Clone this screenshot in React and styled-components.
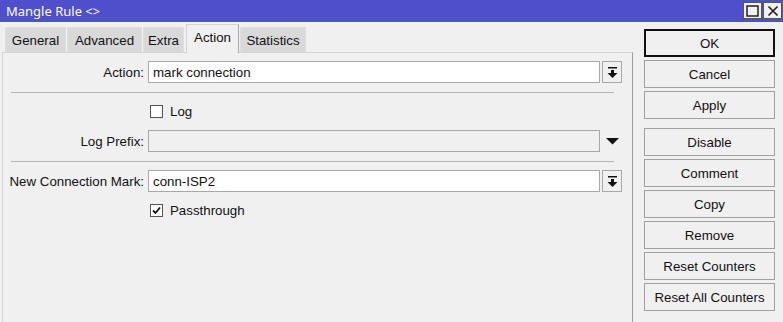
import React from 'react'
import styled, { createGlobalStyle } from 'styled-components';

const GlobalStyle = createGlobalStyle`
    html, body {
        margin: 0;
        padding: 0;
        background: #f0f0f0;
        overflow: hidden;
    }
    * {
        box-sizing: border-box;
    }
`;

function ComboIcon() {
    return (
        <svg width="11" height="11" viewBox="0 0 11 11">
            <rect x="1" y="0" width="9" height="1.5" fill="#111" />
            <rect x="4" y="3" width="3" height="3" fill="#111" />
            <polygon points="0.5,6 10.5,6 5.5,11" fill="#111" />
        </svg>
    )
}

function DownTriangle() {
    return (
        <svg width="13" height="7" viewBox="0 0 13 7">
            <polygon points="0,0 13,0 6.5,6.5" fill="#111" />
        </svg>
    )
}

function CheckMark() {
    return (
        <svg width="11" height="11" viewBox="0 0 11 11">
            <polyline points="2,5.5 4.5,8 9,2.5" fill="none" stroke="#111" strokeWidth="1.8" />
        </svg>
    )
}

const tabs = [
    { name: 'General', width: 61 },
    { name: 'Advanced', width: 75 },
    { name: 'Extra', width: 41 },
    { name: 'Action', width: 53, active: true },
    { name: 'Statistics', width: 66 },
];

const buttons = ['OK', 'Cancel', 'Apply', 'Disable', 'Comment', 'Copy', 'Remove', 'Reset Counters', 'Reset All Counters'];

function App() {
    return (
        <>
            <GlobalStyle />
            <WindowStyled>
                <TitleBar>
                    <span>Mangle Rule &lt;&gt;</span>
                    <TitleButtons>
                        <TitleButton>
                            <svg width="13" height="12" viewBox="0 0 13 12">
                                <rect x="1" y="1" width="11" height="10" fill="none" stroke="#222" strokeWidth="1.5" />
                            </svg>
                        </TitleButton>
                        <TitleButton>
                            <svg width="12" height="12" viewBox="0 0 12 12">
                                <path d="M1.5 1.5 L10.5 10.5 M10.5 1.5 L1.5 10.5" stroke="#222" strokeWidth="1.7" />
                            </svg>
                        </TitleButton>
                    </TitleButtons>
                </TitleBar>
                <Body>
                    <LeftPane>
                        <TabRow>
                            {tabs.map((t) => (
                                <Tab key={t.name} $active={t.active} $width={t.width}>{t.name}</Tab>
                            ))}
                        </TabRow>
                        <Panel>
                            <Row>
                                <Label>Action:</Label>
                                <Field>mark connection</Field>
                                <ComboButton><ComboIcon /></ComboButton>
                            </Row>
                            <Separator />
                            <Row $short>
                                <span />
                                <Check>
                                    <Box />
                                    Log
                                </Check>
                            </Row>
                            <Row>
                                <Label>Log Prefix:</Label>
                                <Field $disabled />
                                <Arrow><DownTriangle /></Arrow>
                            </Row>
                            <Separator />
                            <Row>
                                <Label>New Connection Mark:</Label>
                                <Field>conn-ISP2</Field>
                                <ComboButton><ComboIcon /></ComboButton>
                            </Row>
                            <Row $short>
                                <span />
                                <Check>
                                    <Box><CheckMark /></Box>
                                    Passthrough
                                </Check>
                            </Row>
                        </Panel>
                    </LeftPane>
                    <ButtonColumn>
                        {buttons.map((b, i) => (
                            <Button key={b} $default={i === 0} $spaced={b === 'Disable'}>{b}</Button>
                        ))}
                    </ButtonColumn>
                </Body>
            </WindowStyled>
        </>
    )
}

const WindowStyled = styled.div`
    width: 783px;
    height: 322px;
    background: #f0f0f0;
    font-family: 'Liberation Sans', Arial, sans-serif;
    font-size: 13.3px;
    color: #111;
    display: flex;
    flex-direction: column;
`;

const TitleBar = styled.div`
    height: 22px;
    flex-shrink: 0;
    background: #4f4fcb;
    color: #fff;
    display: flex;
    align-items: center;
    justify-content: space-between;
    padding-left: 6px;
    font-family: 'Noto Sans', 'Open Sans', sans-serif;
    font-size: 13px;
`;

const TitleButtons = styled.div`
    display: flex;
    gap: 1px;
    margin-right: 1px;
    align-self: flex-start;
    margin-top: 2px;
`;

const TitleButton = styled.div`
    width: 19px;
    height: 17px;
    background: #f0f0f0;
    border: 1px solid #555;
    display: flex;
    align-items: center;
    justify-content: center;
`;

const Body = styled.div`
    flex: 1;
    display: flex;
    min-height: 0;
`;

const LeftPane = styled.div`
    width: 633px;
    padding-left: 2px;
    display: flex;
    flex-direction: column;
`;

const TabRow = styled.div`
    height: 30px;
    display: flex;
    align-items: flex-end;
    padding-left: 3px;
    gap: 1px;
`;

const Tab = styled.div`
    width: ${(p) => p.$width}px;
    height: ${(p) => (p.$active ? 29 : 25)}px;
    margin-bottom: ${(p) => (p.$active ? -1 : 0)}px;
    margin-left: ${(p) => (p.$active ? 1 : 0)}px;
    display: flex;
    align-items: center;
    justify-content: center;
    background: ${(p) => (p.$active ? '#f0f0f0' : '#d9d9d9')};
    border: 1px solid ${(p) => (p.$active ? '#d4d4d4' : '#dedede')};
    border-right-color: ${(p) => (p.$active ? '#a8a8a8' : '#dedede')};
    border-bottom: none;
    padding-bottom: ${(p) => (p.$active ? 3 : 0)}px;
    position: relative;
    z-index: ${(p) => (p.$active ? 1 : 0)};
    color: #111;
`;

const Panel = styled.div`
    flex: 1;
    border: 1px solid #d4d4d4;
    border-right-color: #a0a0a0;
    border-bottom: none;
    padding: 8px 10px 0 0;
    display: flex;
    flex-direction: column;
`;

const Row = styled.div`
    display: grid;
    grid-template-columns: 145px 452px 22px;
    height: ${(p) => (p.$short ? 21 : 22)}px;
    margin-bottom: 8px;
    align-items: center;
`;

const Label = styled.div`
    text-align: right;
    padding-right: 4px;
    white-space: nowrap;
`;

const Field = styled.div`
    height: 22px;
    border: 1px solid #a8a8a8;
    background: ${(p) => (p.$disabled ? '#f0f0f0' : '#fff')};
    padding: 0 4px;
    display: flex;
    align-items: center;
`;

const ComboButton = styled.div`
    height: 22px;
    margin-left: 2px;
    border: 1px solid #a8a8a8;
    background: #f0f0f0;
    display: flex;
    align-items: center;
    justify-content: center;
`;

const Arrow = styled.div`
    display: flex;
    align-items: center;
    justify-content: center;
    padding-left: 3px;
`;

const Separator = styled.div`
    height: 1px;
    background: #b4b4b4;
    margin: 1px 8px 8px 8px;
`;

const Check = styled.label`
    display: flex;
    align-items: center;
    gap: 7px;
    padding-left: 2px;
`;

const Box = styled.span`
    width: 13px;
    height: 13px;
    border: 1px solid #555;
    background: #fff;
    display: flex;
    align-items: center;
    justify-content: center;
`;

const ButtonColumn = styled.div`
    flex: 1;
    padding: 7px 8px 0 11px;
    display: flex;
    flex-direction: column;
    gap: 3px;
`;

const Button = styled.div`
    height: 28px;
    flex-shrink: 0;
    border: ${(p) => (p.$default ? '2px solid #111' : '1px solid #a0a0a0')};
    background: #f0f0f0;
    display: flex;
    align-items: center;
    justify-content: center;
    margin-top: ${(p) => (p.$spaced ? 6 : 0)}px;
    color: #111;
`;

export default App;
